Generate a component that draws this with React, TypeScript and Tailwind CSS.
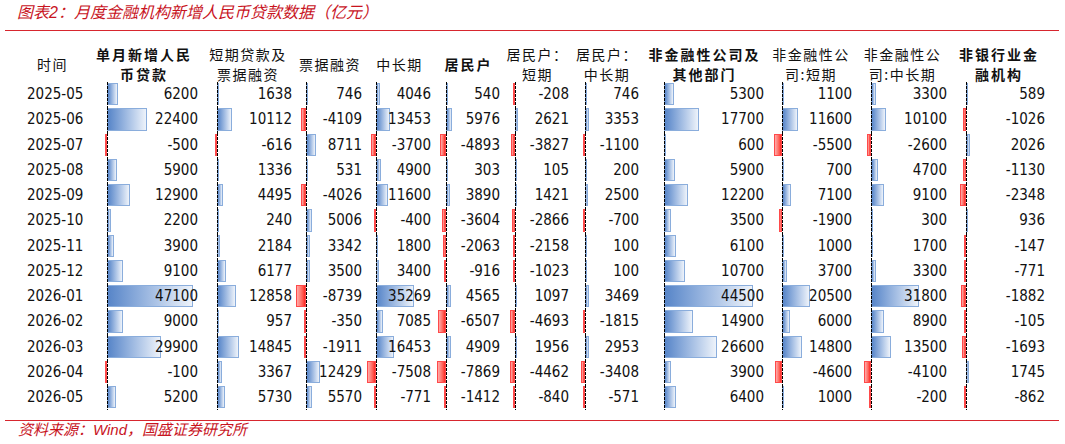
import clsx from "clsx"

type Col = {
  head: string[]
  bold?: boolean
  axis: string
  scale: number
}

const cols: Col[] = [
  { head: ["单月新增人民", "币贷款"], bold: true, axis: "left-[19.5px]", scale: 0.00183 },
  { head: ["短期贷款及", "票据融资"], axis: "left-[15.5px]", scale: 0.0015 },
  { head: ["票据融资"], axis: "left-[11px]", scale: 0.00113 },
  { head: ["中长期"], axis: "left-[10.5px]", scale: 0.0011 },
  { head: ["居民户"], bold: true, axis: "left-[11.5px]", scale: 0.0011 },
  { head: ["居民户：", "短期"], axis: "left-[12px]", scale: 0.0011 },
  { head: ["居民户：", "中长期"], axis: "left-[13px]", scale: 0.0012 },
  { head: ["非金融性公司及", "其他部门"], bold: true, axis: "left-[21.5px]", scale: 0.002 },
  { head: ["非金融性公", "司:短期"], axis: "left-[14.5px]", scale: 0.0014 },
  { head: ["非金融性公", "司:中长期"], axis: "left-[15.5px]", scale: 0.00153 },
  { head: ["非银行业金", "融机构"], bold: true, axis: "left-[15.5px]", scale: 0.0022 },
]

const rows: [string, ...number[]][] = [
  ["2025-05", 6200, 1638, 746, 4046, 540, -208, 746, 5300, 1100, 3300, 589],
  ["2025-06", 22400, 10112, -4109, 13453, 5976, 2621, 3353, 17700, 11600, 10100, -1026],
  ["2025-07", -500, -616, 8711, -3700, -4893, -3827, -1100, 600, -5500, -2600, 2026],
  ["2025-08", 5900, 1336, 531, 4900, 303, 105, 200, 5900, 700, 4700, -1130],
  ["2025-09", 12900, 4495, -4026, 11600, 3890, 1421, 2500, 12200, 7100, 9100, -2348],
  ["2025-10", 2200, 240, 5006, -400, -3604, -2866, -700, 3500, -1900, 300, 936],
  ["2025-11", 3900, 2184, 3342, 1800, -2063, -2158, 100, 6100, 1000, 1700, -147],
  ["2025-12", 9100, 6177, 3500, 3400, -916, -1023, 100, 10700, 3700, 3300, -771],
  ["2026-01", 47100, 12858, -8739, 35269, 4565, 1097, 3469, 44500, 20500, 31800, -1882],
  ["2026-02", 9000, 957, -350, 7085, -6507, -4693, -1815, 14900, 6000, 8900, -105],
  ["2026-03", 29900, 14845, -1911, 16453, 4909, 1956, 2953, 26600, 14800, 13500, -1693],
  ["2026-04", -100, 3367, 12429, -7508, -7869, -4462, -3408, 3900, -4600, -4100, 1745],
  ["2026-05", 5200, 5730, 5570, -771, -1412, -840, -571, 6400, 1000, -200, -862],
]

const gridCols =
  "grid grid-cols-[87px_114px_94px_70px_69px_69px_69px_70px_125px_88px_95px_98px]"

function BarCell({ v, col }: { v: number; col: Col }) {
  const w = Math.max(Math.abs(v) * col.scale, 2)
  const pos = v >= 0
  return (
    <div className="relative h-[25.25px]">
      <div className={clsx("absolute inset-y-0 w-0", col.axis)}>
        <div
          className={clsx(
            "absolute top-[1px] bottom-[2px] border",
            pos
              ? "left-0 border-[#8aaddc] bg-linear-to-r from-[#5785c8] to-[#eef3fa]"
              : "right-0 border-[#ff4a4a] bg-linear-to-l from-[#ff1f1f] to-[#ffaaaa]"
          )}
          style={{ width: w }}
        />
        <div className="absolute inset-y-0 left-0 w-px bg-[repeating-linear-gradient(to_bottom,#000_0_3px,transparent_3px_4px)]" />
      </div>
      <div className="relative pr-[3px] text-right leading-[25.25px]">{v}</div>
    </div>
  )
}

export default function App() {
  return (
    <div className="w-[1065px] h-[444px] overflow-hidden bg-white text-black font-['Liberation_Sans','Noto_Sans_CJK_SC',sans-serif]">
      {/* Title */}
      <div className="h-[30px] pt-[3px] pl-[17px] text-[16px] leading-[20px] italic text-[#c8141e]">
        图表2：月度金融机构新增人民币贷款数据（亿元）
      </div>
      <div className="ml-[5px] mr-[6px] h-px bg-[#d7262e]" />

      {/* Header */}
      <div className={clsx(gridCols, "h-[51px] pt-[13px] text-[14px] leading-[20px] font-['Noto_Sans_CJK_SC',sans-serif] text-[#111]")}>
        <div className="flex items-center pl-[37px] tracking-[1.5px]">时间</div>
        {cols.map((c, i) => (
          <div
            key={i}
            className={clsx(
              "flex flex-col items-center justify-center whitespace-nowrap",
              c.bold ? "font-bold tracking-[2px]" : "tracking-[1.5px]"
            )}
          >
            {c.head.map((h, j) => (
              <span key={j}>{h}</span>
            ))}
          </div>
        ))}
      </div>

      {/* Body */}
      <div className="font-['DejaVu_Sans_Condensed','DejaVu_Sans',sans-serif] [font-stretch:condensed] text-[15px] text-[#111]">
        {rows.map(([date, ...vals]) => (
          <div key={date} className={gridCols}>
            <div className="pl-[27px] leading-[25.25px]">{date}</div>
            {vals.map((v, i) => (
              <BarCell key={i} v={v} col={cols[i]} />
            ))}
          </div>
        ))}
      </div>

      {/* Source */}
      <div className="mt-[10px] ml-[5px] mr-[6px] h-px bg-[#d7262e]" />
      <div className="pl-[18px] text-[15px] leading-[18px] italic text-[#c8141e]">
        资料来源：Wind，国盛证券研究所
      </div>
    </div>
  )
}
